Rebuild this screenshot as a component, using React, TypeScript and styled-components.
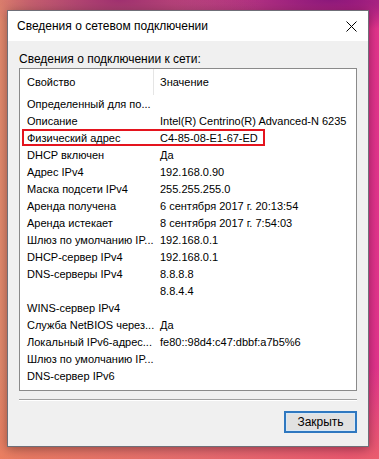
import React from "react";
import styled, { createGlobalStyle } from "styled-components";

const GlobalStyle = createGlobalStyle`
  html, body { margin: 0; padding: 0; }
  body {
    width: 379px;
    height: 459px;
    overflow: hidden;
    font-family: "Liberation Sans", Arial, sans-serif;
    background:
      radial-gradient(ellipse 140px 40px at 120px 0px, rgba(150, 40, 110, 0.85), transparent),
      radial-gradient(ellipse 160px 30px at 330px 0px, rgba(120, 20, 120, 0.8), transparent),
      linear-gradient(180deg, transparent 80%, rgba(240, 120, 90, 0.6) 100%),
      linear-gradient(90deg, #e3896c 0%, #d9786e 8%, #d65a88 50%, #de2a8a 92%, #e2358c 100%);
  }
`;

const Page = styled.div`
  padding: 10px 0 0 7px;
`;

const Window = styled.div`
  width: 360px;
  height: 435px;
  border: 1px solid #6f6f78;
  background: #f0f0f0;
  display: flex;
  flex-direction: column;
  box-shadow: 0 2px 10px rgba(0, 0, 0, 0.35);
`;

const TitleBar = styled.div`
  height: 30px;
  background: #ffffff;
  display: flex;
  align-items: center;
  justify-content: space-between;
  padding: 0 11px 0 9px;
  flex-shrink: 0;
`;

const Title = styled.span`
  font-size: 12px;
  color: #000;
`;

const CloseIcon = styled.svg`
  width: 11px;
  height: 11px;
  display: block;
`;

const Body = styled.div`
  flex: 1;
  display: flex;
  flex-direction: column;
  padding: 10px 11px 0 11px;
`;

const Caption = styled.div`
  font-size: 12px;
  line-height: 16px;
  color: #000;
  margin-bottom: 1px;
`;

const ListBox = styled.div`
  height: 321px;
  border: 1px solid #8a8a8a;
  background: #fff;
  overflow: hidden;
`;

const Header = styled.div`
  display: grid;
  grid-template-columns: 134px 1fr;
  height: 26px;
`;

const HeaderCell = styled.div<{ $sep?: boolean }>`
  font-size: 11px;
  color: #000;
  display: flex;
  align-items: center;
  padding-left: ${(p) => (p.$sep ? "7px" : "6px")};
  border-right: ${(p) => (p.$sep ? "1px solid #e5e5e5" : "none")};
`;

const Row = styled.div<{ $marked?: boolean }>`
  position: relative;
  display: grid;
  grid-template-columns: 134px 1fr;
  height: 17px;
  align-items: center;
  font-size: 11px;
  color: #000;
  white-space: nowrap;
  &::after {
    content: "";
    display: ${(p) => (p.$marked ? "block" : "none")};
    position: absolute;
    left: 2px;
    top: 0px;
    width: 243px;
    height: 17px;
    box-sizing: border-box;
    border: 2px solid #e4141e;
  }
`;

const Cell = styled.div<{ $first?: boolean }>`
  padding-left: ${(p) => (p.$first ? "7px" : "6px")};
  overflow: hidden;
`;

const Footer = styled.div`
  display: flex;
  flex-direction: column;
  padding-top: 8px;
`;

const Separator = styled.div`
  height: 1px;
  background: #a0a0a0;
  border-bottom: 1px solid #ffffff;
`;

const ButtonRow = styled.div`
  display: flex;
  justify-content: flex-end;
  padding-top: 10px;
`;

const Button = styled.button`
  width: 73px;
  height: 22px;
  box-sizing: border-box;
  border: 2px solid #2f78c0;
  background: #e1e1e1;
  font-family: "Liberation Sans", Arial, sans-serif;
  font-size: 12px;
  color: #000;
  padding: 0;
  box-shadow: inset 0 0 0 1px #d7e8f6;
`;

const rows: [string, string][] = [
  ["Определенный для по...", ""],
  ["Описание", "Intel(R) Centrino(R) Advanced-N 6235"],
  ["Физический адрес", "C4-85-08-E1-67-ED"],
  ["DHCP включен", "Да"],
  ["Адрес IPv4", "192.168.0.90"],
  ["Маска подсети IPv4", "255.255.255.0"],
  ["Аренда получена", "6 сентября 2017 г. 20:13:54"],
  ["Аренда истекает", "8 сентября 2017 г. 7:54:03"],
  ["Шлюз по умолчанию IP...", "192.168.0.1"],
  ["DHCP-сервер IPv4", "192.168.0.1"],
  ["DNS-серверы IPv4", "8.8.8.8"],
  ["", "8.8.4.4"],
  ["WINS-сервер IPv4", ""],
  ["Служба NetBIOS через...", "Да"],
  ["Локальный IPv6-адрес...", "fe80::98d4:c47:dbbf:a7b5%6"],
  ["Шлюз по умолчанию IP...", ""],
  ["DNS-сервер IPv6", ""],
];

export default function App() {
  return (
    <>
      <GlobalStyle />
      <Page>
        <Window>
          <TitleBar>
            <Title>Сведения о сетевом подключении</Title>
            <CloseIcon viewBox="0 0 11 11">
              <path d="M0.5 0.5 L10.5 10.5 M10.5 0.5 L0.5 10.5" stroke="#000" strokeWidth="1" fill="none" />
            </CloseIcon>
          </TitleBar>
          <Body>
            <Caption>Сведения о подключении к сети:</Caption>
            <ListBox>
              <Header>
                <HeaderCell $sep>Свойство</HeaderCell>
                <HeaderCell>Значение</HeaderCell>
              </Header>
              {rows.map(([k, v], i) => (
                <Row key={i} $marked={i === 2}>
                  <Cell $first>{k}</Cell>
                  <Cell>{v}</Cell>
                </Row>
              ))}
            </ListBox>
            <Footer>
              <Separator />
              <ButtonRow>
                <Button>Закрыть</Button>
              </ButtonRow>
            </Footer>
          </Body>
        </Window>
      </Page>
    </>
  );
}
